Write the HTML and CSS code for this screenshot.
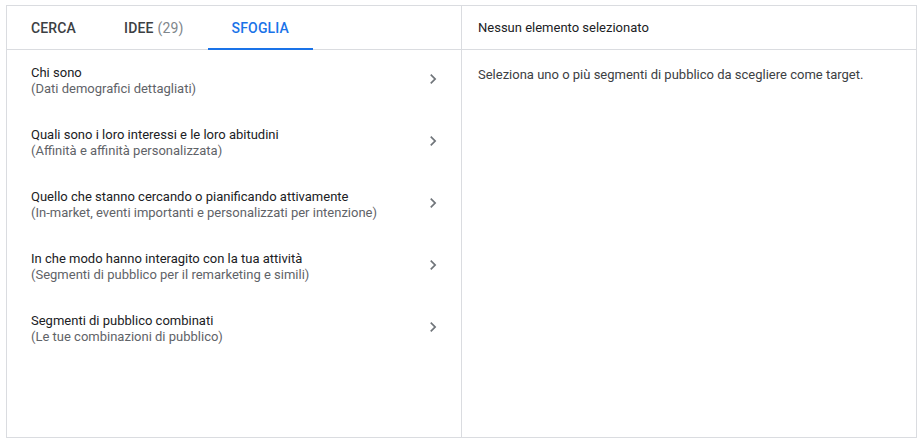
FILE: index.html
```html
<!DOCTYPE html>
<html lang="it">
<head>
    <meta charset="UTF-8">
    <title>Segmenti di pubblico</title>
    <link rel="stylesheet" href="styles.css">
</head>
<body>

<div class="picker">
  <div class="pane left">
    <div class="tabs">
      <div class="tab">CERCA</div>
      <div class="tab">IDEE <span class="count">(29)</span></div>
      <div class="tab active">SFOGLIA</div>
    </div>
    <div class="list">
      <div class="row">
        <div class="label">
          <div class="title">Chi sono</div>
          <div class="sub">(Dati demografici dettagliati)</div>
        </div>
        <svg class="chev" viewBox="0 0 24 24"><path d="M10 6L8.59 7.41 13.17 12l-4.58 4.59L10 18l6-6z"/></svg>
      </div>
      <div class="row">
        <div class="label">
          <div class="title">Quali sono i loro interessi e le loro abitudini</div>
          <div class="sub">(Affinità e affinità personalizzata)</div>
        </div>
        <svg class="chev" viewBox="0 0 24 24"><path d="M10 6L8.59 7.41 13.17 12l-4.58 4.59L10 18l6-6z"/></svg>
      </div>
      <div class="row">
        <div class="label">
          <div class="title">Quello che stanno cercando o pianificando attivamente</div>
          <div class="sub">(In-market, eventi importanti e personalizzati per intenzione)</div>
        </div>
        <svg class="chev" viewBox="0 0 24 24"><path d="M10 6L8.59 7.41 13.17 12l-4.58 4.59L10 18l6-6z"/></svg>
      </div>
      <div class="row">
        <div class="label">
          <div class="title">In che modo hanno interagito con la tua attività</div>
          <div class="sub">(Segmenti di pubblico per il remarketing e simili)</div>
        </div>
        <svg class="chev" viewBox="0 0 24 24"><path d="M10 6L8.59 7.41 13.17 12l-4.58 4.59L10 18l6-6z"/></svg>
      </div>
      <div class="row">
        <div class="label">
          <div class="title">Segmenti di pubblico combinati</div>
          <div class="sub">(Le tue combinazioni di pubblico)</div>
        </div>
        <svg class="chev" viewBox="0 0 24 24"><path d="M10 6L8.59 7.41 13.17 12l-4.58 4.59L10 18l6-6z"/></svg>
      </div>
    </div>
  </div>
  <div class="pane right">
    <div class="selected-head">Nessun elemento selezionato</div>
    <div class="empty">Seleziona uno o più segmenti di pubblico da scegliere come target.</div>
  </div>
</div>

</body>
</html>
```

FILE: styles.css
```css
body { margin: 0; padding: 5px 0 0 6px; font-family: Roboto, "Liberation Sans", sans-serif; background: #fff; color: #202124; }
.picker { display: grid; grid-template-columns: 455px 454px; width: 909px; height: 431px; border: 1px solid #dadce0; }
.pane { display: flex; flex-direction: column; }
.left { border-right: 1px solid #dadce0; }

.tabs { display: flex; height: 43px; border-bottom: 1px solid #dadce0; }
.tab { padding: 0 24px; font-size: 14px; font-weight: 500; letter-spacing: 0.15px; color: #3c4043; display: flex; align-items: center; border-bottom: 2px solid transparent; margin-bottom: -1px; padding-top: 1px; }
.tab .count { color: #80868b; font-weight: 400; margin-left: 4px; }
.tab.active { color: #1a73e8; border-bottom-color: #1a73e8; }

.list { display: flex; flex-direction: column; }
.row { height: 62px; padding: 0 18px 0 24px; display: flex; align-items: center; justify-content: space-between; }
.title { font-size: 13px; line-height: 16px; color: #202124; }
.sub { font-size: 13px; line-height: 16px; color: #5f6368; }
.chev { width: 20px; height: 20px; fill: #70757a; margin-top: -5px; }

.selected-head { height: 43px; border-bottom: 1px solid #dadce0; display: flex; align-items: center; padding: 0 16px; font-size: 13px; color: #202124; }
.empty { padding: 17px 16px; font-size: 13px; line-height: 16px; color: #3c4043; }
```
